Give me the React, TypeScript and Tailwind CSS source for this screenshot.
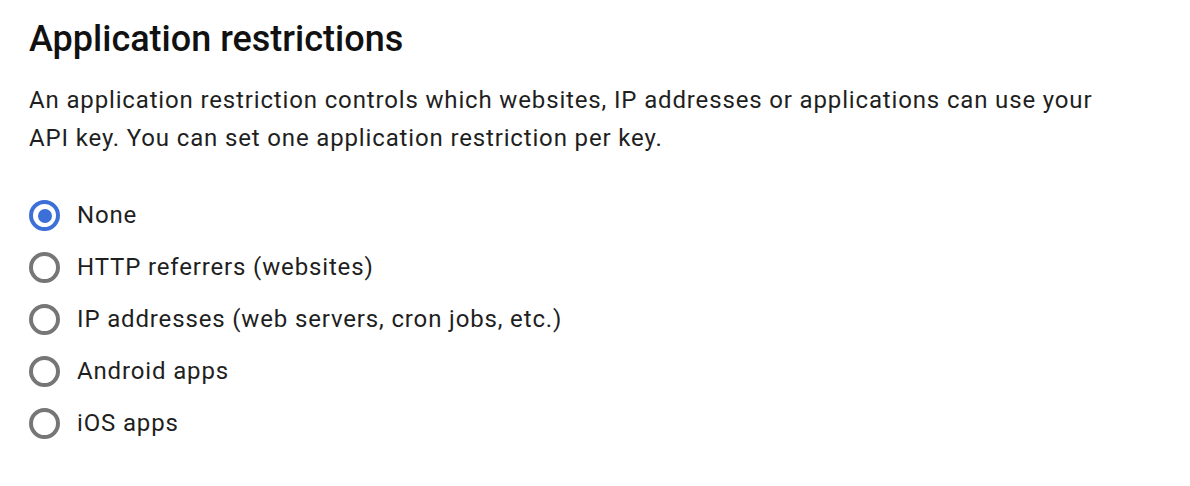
import React, { useState } from "react";

const OPTIONS = [
  "None",
  "HTTP referrers (websites)",
  "IP addresses (web servers, cron jobs, etc.)",
  "Android apps",
  "iOS apps",
];

function Radio({ checked }: { checked: boolean }) {
  return (
    <span
      className={`flex h-[31px] w-[31px] shrink-0 items-center justify-center rounded-full border-[4px] ${
        checked ? "border-[#3c6fd8]" : "border-[#767676]"
      }`}
    >
      {checked && <span className="h-[14px] w-[14px] rounded-full bg-[#3c6fd8]" />}
    </span>
  );
}

export default function App() {
  const [selected, setSelected] = useState(0);

  return (
    <div className="min-h-screen bg-white px-[29px] pt-[17px] text-[#202124] [font-family:Roboto,'Noto_Sans',sans-serif]">
      <h2 className="text-[36px] font-medium leading-[44px] text-[#111]">Application restrictions</h2>
      <p className="mt-[20px] max-w-[1080px] text-[24px] leading-[38px] tracking-[0.85px] text-[#1f1f1f]">
        An application restriction controls which websites, IP addresses or applications can use your API key. You can
        set one application restriction per key.
      </p>
      <div className="mt-[43px] flex flex-col gap-[21px]">
        {OPTIONS.map((label, i) => (
          <label
            key={label}
            className="flex cursor-pointer items-center gap-[17px]"
            onClick={() => setSelected(i)}
          >
            <Radio checked={selected === i} />
            <span className="text-[24px] leading-[31px] tracking-[0.85px] text-[#1f1f1f]">{label}</span>
          </label>
        ))}
      </div>
    </div>
  );
}
